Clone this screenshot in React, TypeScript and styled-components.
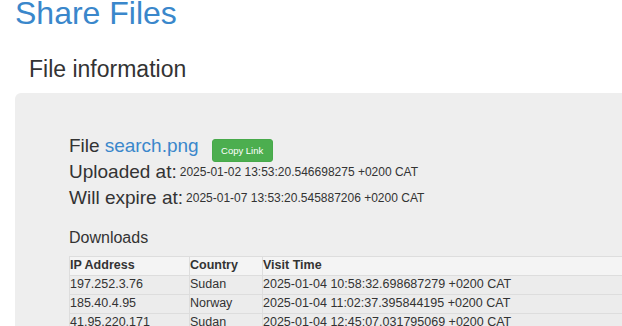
import React from 'react';
import styled, { createGlobalStyle } from 'styled-components';

const GlobalStyle = createGlobalStyle`
  html, body {
    margin: 0;
    padding: 0;
    overflow: hidden;
    background: #fff;
  }
  body {
    font-family: "Liberation Sans", Arial, sans-serif;
    color: #333;
  }
`;

const Page = styled.div`
  width: 780px;
  padding: 0 15px;
`;

const Title = styled.h1`
  margin: -5px 0 0 0;
  font-size: 32px;
  line-height: 36px;
  font-weight: 400;
  color: #3a87cb;
`;

const SectionTitle = styled.h3`
  margin: 25px 0 0 14px;
  font-size: 23px;
  line-height: 26px;
  font-weight: 400;
`;

const Jumbotron = styled.div`
  margin-top: 11px;
  background: #eee;
  border-radius: 6px;
  padding: 40px 54px 30px;
`;

const InfoRow = styled.div`
  display: flex;
  align-items: flex-start;
  height: 26px;
  font-size: 19px;
  line-height: 26px;
  white-space: nowrap;
`;

const Label = styled.span`
  font-size: 19px;
`;

const Stamp = styled.small`
  font-size: 12px;
  margin-left: 3px;
`;

const FileLink = styled.a`
  color: #3a87cb;
  text-decoration: none;
  margin-left: 5px;
`;

const CopyButton = styled.button`
  margin: 6px 0 0 13px;
  width: 61px;
  height: 23px;
  padding: 0;
  border: 1px solid #47a94a;
  border-radius: 3px;
  background: #4cae4f;
  color: #fff;
  font-family: "Liberation Sans", Arial, sans-serif;
  font-size: 9.5px;
  line-height: 21px;
  cursor: pointer;
`;

const SubTitle = styled.h4`
  margin: 18px 0 0 0;
  font-size: 16px;
  line-height: 18px;
  font-weight: 400;
`;

const Table = styled.table`
  margin-top: 9px;
  width: 100%;
  border-collapse: collapse;
  font-size: 12.5px;
`;

const Cell = styled.td<{ $w?: number; $head?: boolean }>`
  width: ${p => (p.$w ? `${p.$w}px` : 'auto')};
  border: 1px solid #ddd;
  padding: 0 1px 1px 0;
  line-height: 17px;
  text-align: left;
  font-weight: ${p => (p.$head ? 700 : 400)};
  background: ${p => (p.$head ? '#f4f4f4' : '#ececec')};
  white-space: nowrap;
`;

const downloads = [
  { ip: '197.252.3.76', country: 'Sudan', time: '2025-01-04 10:58:32.698687279 +0200 CAT' },
  { ip: '185.40.4.95', country: 'Norway', time: '2025-01-04 11:02:37.395844195 +0200 CAT' },
  { ip: '41.95.220.171', country: 'Sudan', time: '2025-01-04 12:45:07.031795069 +0200 CAT' },
  { ip: '41.95.220.171', country: 'Sudan', time: '2025-01-04 12:47:11.402116845 +0200 CAT' },
];

export default function App() {
  return (
    <Page>
      <GlobalStyle />
      <Title>Share Files</Title>
      <SectionTitle>File information</SectionTitle>
      <Jumbotron>
        <InfoRow>
          <Label>File</Label>
          <FileLink href="#">search.png</FileLink>
          <CopyButton>Copy Link</CopyButton>
        </InfoRow>
        <InfoRow>
          <Label>Uploaded at:</Label>
          <Stamp>2025-01-02 13:53:20.546698275 +0200 CAT</Stamp>
        </InfoRow>
        <InfoRow>
          <Label>Will expire at:</Label>
          <Stamp>2025-01-07 13:53:20.545887206 +0200 CAT</Stamp>
        </InfoRow>
        <SubTitle>Downloads</SubTitle>
        <Table>
          <thead>
            <tr>
              <Cell as="th" $head $w={118}>IP Address</Cell>
              <Cell as="th" $head $w={71}>Country</Cell>
              <Cell as="th" $head>Visit Time</Cell>
            </tr>
          </thead>
          <tbody>
            {downloads.map((d, i) => (
              <tr key={i}>
                <Cell>{d.ip}</Cell>
                <Cell>{d.country}</Cell>
                <Cell>{d.time}</Cell>
              </tr>
            ))}
          </tbody>
        </Table>
      </Jumbotron>
    </Page>
  );
}
